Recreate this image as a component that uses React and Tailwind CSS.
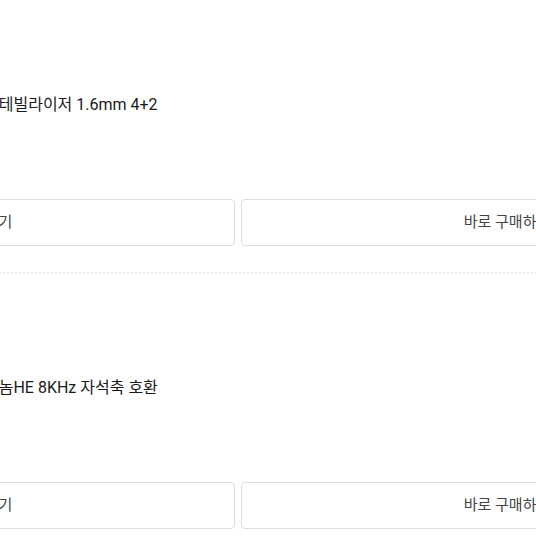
export default function App() {
  const items = [
    { name: "스테빌라이저 1.6mm 4+2" },
    { name: "그놈HE 8KHz 자석축 호환" },
  ];
  return (
    <div
      className="w-[536px] h-[536px] overflow-hidden bg-white"
      style={{ fontFamily: 'Roboto, "Noto Sans CJK KR", sans-serif' }}
    >
      <div className="w-[1070px] -ml-[297px]">
        {items.map((it, i) => (
          <div key={i} className={i === 0 ? "pt-[95px]" : "pt-[104px]"}>
            <div className="pl-[281px] text-[16px] leading-[20px] text-[#1a1a1a]">{it.name}</div>
            <div className="mt-[84px] flex gap-[6px]">
              <button className="flex-1 h-[47px] rounded-[4px] border border-[#dddddd] bg-white text-[15px] text-[#444]">
                장바구니 담기
              </button>
              <button className="flex-1 h-[47px] rounded-[4px] border border-[#dddddd] bg-white text-[15px] text-[#444]">
                바로 구매하기
              </button>
            </div>
            <div className="mt-[26px] border-t-2 border-dotted border-[#ececec]" />
          </div>
        ))}
      </div>
    </div>
  );
}
